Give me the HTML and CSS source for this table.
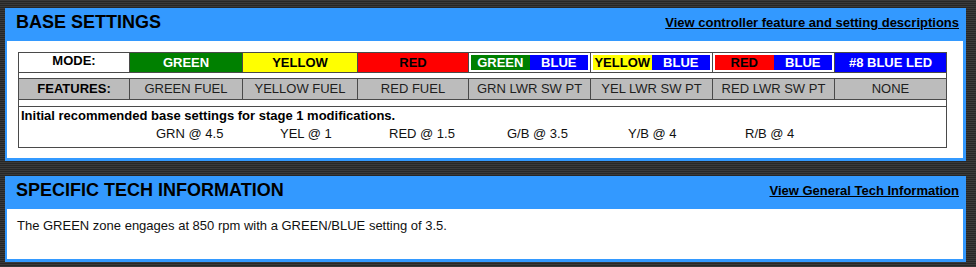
FILE: index.html
```html
<!DOCTYPE html>
<html lang="en">
<head>
<meta charset="utf-8">
<title>Base Settings</title>
<link rel="stylesheet" href="styles.css">
</head>
<body>
<div class="page">
  <section class="panel">
    <div class="panel-head">
      <h2 class="panel-title">BASE SETTINGS</h2>
      <a class="panel-link" href="#">View controller feature and setting descriptions</a>
    </div>
    <div class="panel-body base-body">
      <div class="matrix">
        <div class="cell label">MODE:</div>
        <div class="cell mode c-green">GREEN</div>
        <div class="cell mode c-yellow">YELLOW</div>
        <div class="cell mode c-red">RED</div>
        <div class="cell mode split"><span class="half c-green">GREEN</span><span class="half c-blue">BLUE</span></div>
        <div class="cell mode split"><span class="half c-yellow">YELLOW</span><span class="half c-blue">BLUE</span></div>
        <div class="cell mode split"><span class="half c-red">RED</span><span class="half c-blue">BLUE</span></div>
        <div class="cell mode c-blue">#8 BLUE LED</div>

        <div class="spacer"></div>

        <div class="cell feat label">FEATURES:</div>
        <div class="cell feat">GREEN FUEL</div>
        <div class="cell feat">YELLOW FUEL</div>
        <div class="cell feat">RED FUEL</div>
        <div class="cell feat">GRN LWR SW PT</div>
        <div class="cell feat">YEL LWR SW PT</div>
        <div class="cell feat">RED LWR SW PT</div>
        <div class="cell feat">NONE</div>

        <div class="spacer"></div>

        <div class="note">
          <p class="note-title">Initial recommended base settings for stage 1 modifications.</p>
          <div class="note-values">
            <span>GRN @ 4.5</span>
            <span>YEL @ 1</span>
            <span>RED @ 1.5</span>
            <span>G/B @ 3.5</span>
            <span>Y/B @ 4</span>
            <span>R/B @ 4</span>
          </div>
        </div>
      </div>
    </div>
  </section>

  <section class="panel">
    <div class="panel-head">
      <h2 class="panel-title">SPECIFIC TECH INFORMATION</h2>
      <a class="panel-link" href="#">View General Tech Information</a>
    </div>
    <div class="panel-body tech-body">
      <p class="tech-text">The GREEN zone engages at 850 rpm with a GREEN/BLUE setting of 3.5.</p>
    </div>
  </section>
</div>
</body>
</html>
```
FILE: styles.css
```css
html, body {
  margin: 0;
  padding: 0;
}

body {
  font-family: "Liberation Sans", Arial, sans-serif;
  font-size: 13px;
  color: #000;
  background: repeating-linear-gradient(to bottom, #3a3a3a 0, #3a3a3a 1px, #272727 1px, #272727 2px);
  min-height: 267px;
}

.page {
  display: flex;
  flex-direction: column;
  gap: 15px;
  padding: 8px 0 0 5px;
}

/* blue framed panel */
.panel {
  width: 961px;
  box-sizing: border-box;
  background: #3399ff;
  padding: 0 3px 3px 2px;
}

.panel-head {
  height: 33px;
  display: flex;
  justify-content: space-between;
  align-items: flex-start;
}

.panel-title {
  margin: 0;
  padding: 4px 0 0 9px;
  font-size: 18px;
  line-height: 21px;
  font-weight: bold;
  color: #000;
}

.panel-link {
  margin: 7px 4px 0 0;
  font-size: 13px;
  line-height: 15px;
  font-weight: bold;
  color: #000;
  text-decoration: underline;
}

.panel-body {
  background: #fff;
}

.base-body {
  padding: 11px 0 10px 11px;
}

/* settings grid; the 1px gaps show the dark background as cell rules */
.matrix {
  display: grid;
  grid-template-columns: 110px 112px 114px 110px 121px 121px 121px 111px;
  grid-template-rows: 19px 5px 20px 6px 40px;
  gap: 1px;
  width: max-content;
  background: #4a4a4a;
  border: 1px solid #4a4a4a;
}

.cell {
  text-align: center;
  white-space: nowrap;
}

.mode {
  line-height: 19px;
  font-weight: bold;
}

.label {
  background: #fff;
  font-weight: bold;
}

.feat {
  background: #bcbcbc;
  color: #1e1e1e;
  line-height: 20px;
}

.feat.label {
  color: #000;
}

.c-green { background: #008000; color: #fff; }
.c-yellow { background: #ffff00; color: #000; }
.c-red { background: #ff0000; color: #000; }
.c-blue { background: #0000ff; color: #fff; }

.split {
  background: #fff;
  padding: 2px;
  display: flex;
}

.half {
  flex: 1;
  line-height: 15px;
  text-align: center;
}

.spacer {
  grid-column: 1 / -1;
  background: #fff;
}

.note {
  grid-column: 1 / -1;
  background: #fff;
  padding: 1px 0 0 2px;
}

.note-title {
  margin: 0;
  line-height: 15px;
  font-weight: bold;
}

.note-values {
  margin-top: 3px;
  padding-left: 135px;
  display: grid;
  grid-template-columns: 124px 109px 118px 121px 117px auto;
  line-height: 15px;
  color: #111;
}

.tech-body {
  height: 50px;
  box-sizing: border-box;
  padding: 9px 0 0 10px;
}

.tech-text {
  margin: 0;
  line-height: 15px;
  color: #111;
}
```
